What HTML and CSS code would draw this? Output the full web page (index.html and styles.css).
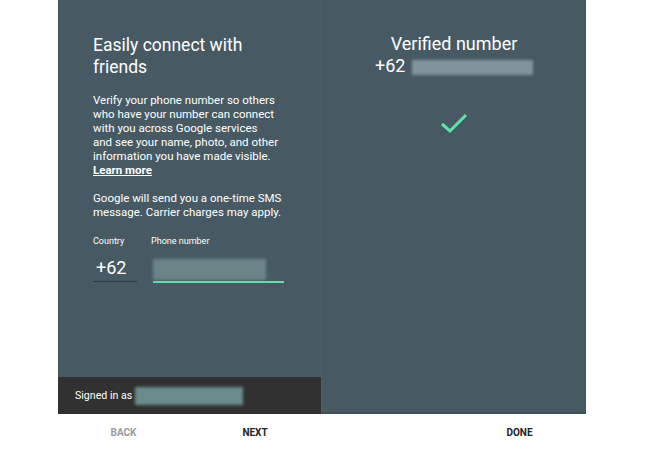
FILE: index.html
```html
<!DOCTYPE html>
<html lang="en">
<head>
    <meta charset="UTF-8">
    <meta name="viewport" content="width=device-width, initial-scale=1.0">
    <title>Verify phone number</title>
    <link rel="stylesheet" href="styles.css">
</head>
<body>

    <div class="screen">
        <div class="panels">
            <div class="panel panel-left">
                <div class="panel-body">
                    <h1>Easily connect with friends</h1>
                    <p class="text">
                        Verify your phone number so others who have your number can connect with you across Google services and&nbsp;see your name, photo, and other information you have made visible.<br>
                        <a href="#" class="link">Learn more</a>
                    </p>
                    <p class="text">Google will send you a one-time SMS message. Carrier charges may apply.</p>

                    <div class="fields">
                        <div class="field field-country">
                            <label class="field-label">Country</label>
                            <div class="field-value">+62</div>
                        </div>
                        <div class="field field-phone">
                            <label class="field-label">Phone number</label>
                            <div class="field-value">
                                <span class="blur blur-phone"></span>
                            </div>
                        </div>
                    </div>
                </div>
                <div class="signed-in">
                    Signed in as <span class="blur blur-account"></span>
                </div>
            </div>

            <div class="panel panel-right">
                <h2>Verified number</h2>
                <div class="verified-number">+62 <span class="blur blur-verified"></span></div>
                <svg class="check" width="30" height="24" viewBox="0 0 30 24">
                    <polyline points="3,13 11,20 27,4" fill="none" stroke="#5fe3ad" stroke-width="3"/>
                </svg>
            </div>
        </div>

        <div class="actions">
            <button class="action action-muted">BACK</button>
            <button class="action">NEXT</button>
            <span></span>
            <button class="action">DONE</button>
        </div>
    </div>

</body>
</html>
```

FILE: styles.css
```css
body {
    font-family: 'Roboto', 'Liberation Sans', sans-serif;
    background-color: #fff;
    margin: 0;
    padding: 0;
}
.screen {
    width: 528px;
    margin-left: 58px;
}
.panels {
    display: flex;
    height: 414px;
    background-color: #475a63;
    color: #fff;
}
.panel-left {
    width: 263px;
    display: flex;
    flex-direction: column;
}
.panel-body {
    flex: 1;
    padding: 34px 24px 0 35px;
}
.panel-right {
    flex: 1;
    display: flex;
    flex-direction: column;
    align-items: center;
    border-left: 1px solid #4d6169;
    border-bottom: 2px solid #3e5058;
}
h1 {
    font-size: 17.5px;
    font-weight: normal;
    line-height: 22px;
    margin: 0 0 15px;
}
.text {
    font-size: 11.5px;
    line-height: 14px;
    margin: 0 0 14px;
}
.link {
    color: #fff;
    font-weight: bold;
    text-decoration: underline;
}
.fields {
    display: flex;
    gap: 15px;
    margin-top: 16px;
}
.field-label {
    display: block;
    font-size: 9px;
    line-height: 12px;
    margin-bottom: 8px;
}
.field-value {
    font-size: 18px;
    line-height: 26px;
    height: 26px;
    border-bottom: 1px solid #2f3d43;
}
.field-country .field-value {
    width: 41px;
    padding-left: 3px;
}
.field-phone {
    margin-left: -1px;
}
.field-phone .field-value {
    width: 131px;
    border-bottom: 2px solid #5fe3ad;
    margin-left: 2px;
}
.blur {
    display: inline-block;
    background-color: #6f8a8f;
    filter: blur(1.5px);
    vertical-align: middle;
}
.blur-phone {
    width: 113px;
    height: 21px;
    background-color: #6c8488;
}
.signed-in {
    height: 37px;
    display: flex;
    align-items: center;
    padding-left: 17px;
    gap: 3px;
    background-color: #313131;
    font-size: 10.6px;
}
.blur-account {
    width: 108px;
    height: 18px;
    background-color: #6b8a8b;
}
h2 {
    font-size: 18px;
    font-weight: normal;
    line-height: 22px;
    margin: 33px 0 0;
}
.verified-number {
    font-size: 18px;
    line-height: 22px;
}
.blur-verified {
    width: 121px;
    height: 15px;
    margin-left: 2px;
    background-color: #7f959b;
}
.check {
    margin-top: 34px;
}
.actions {
    display: grid;
    grid-template-columns: 131px 132px 132px 133px;
    height: 36px;
}
.action {
    font-family: 'Roboto', 'Liberation Sans', sans-serif;
    font-size: 10px;
    font-weight: bold;
    color: #222;
    background: none;
    border: none;
    padding: 0;
}
.action-muted {
    color: #9a9a9a;
}
```
